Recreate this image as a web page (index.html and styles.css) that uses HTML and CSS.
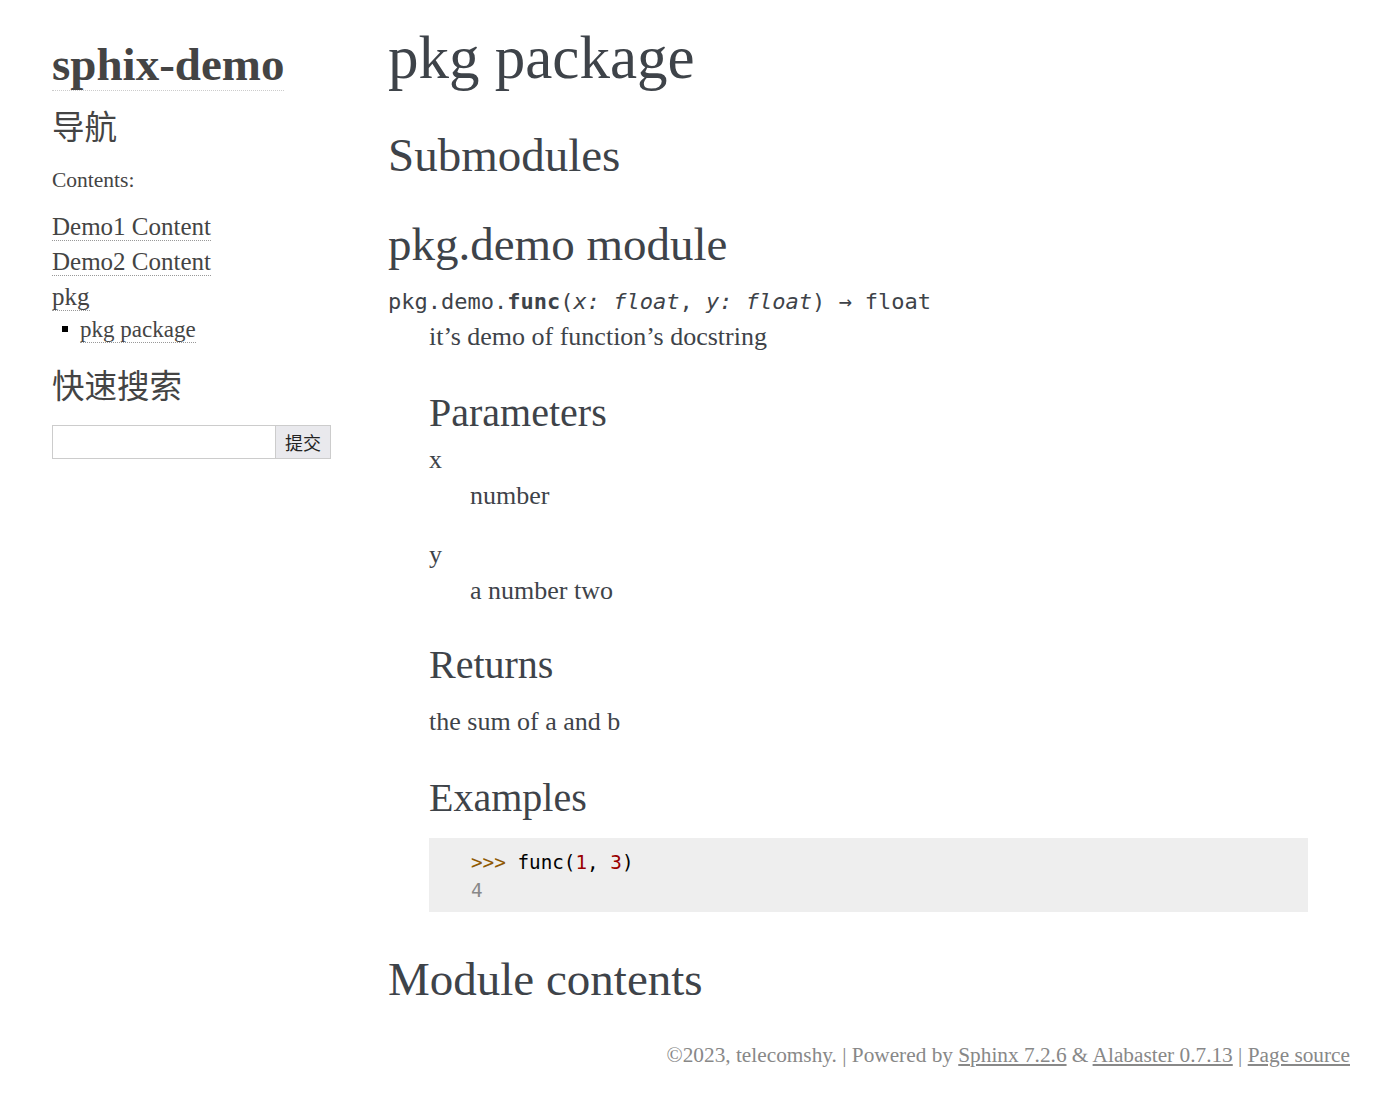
FILE: index.html
```html
<!DOCTYPE html>
<html lang="zh-CN">
<head>
    <meta charset="UTF-8">
    <meta name="viewport" content="width=device-width, initial-scale=1.0">
    <title>pkg package &#8212; sphix-demo</title>
    <link rel="stylesheet" href="styles.css">
</head>
<body>
    <div class="document">
        <div class="sphinxsidebar">
            <h1 class="logo"><a href="#">sphix-demo</a></h1>
            <h3 class="side-title">导航</h3>
            <p class="caption">Contents:</p>
            <ul class="toc">
                <li><a href="#">Demo1 Content</a></li>
                <li><a href="#">Demo2 Content</a></li>
                <li><a href="#">pkg</a>
                    <ul class="toc-sub">
                        <li><a href="#">pkg package</a></li>
                    </ul>
                </li>
            </ul>
            <h3 class="side-title search-title">快速搜索</h3>
            <form class="search">
                <input type="text" name="q" aria-label="search">
                <button type="submit">提交</button>
            </form>
        </div>

        <div class="body">
            <h1 class="page-title">pkg package</h1>
            <h2 class="section-title">Submodules</h2>
            <h2 class="section-title">pkg.demo module</h2>

            <dl class="function">
                <dt class="sig">
                    <span class="sig-prename">pkg.demo.</span><span class="sig-name">func</span>(<em>x: float</em>, <em>y: float</em>) → float
                </dt>
                <dd>
                    <p class="docstring">it’s demo of function’s docstring</p>

                    <p class="rubric rubric-first">Parameters</p>
                    <dl class="params">
                        <dt class="param-name">x</dt>
                        <dd class="param-desc">number</dd>
                        <dt class="param-name param-next">y</dt>
                        <dd class="param-desc">a number two</dd>
                    </dl>

                    <p class="rubric">Returns</p>
                    <p class="returns">the sum of a and b</p>

                    <p class="rubric rubric-examples">Examples</p>
                    <pre class="highlight"><span class="gp">&gt;&gt;&gt; </span>func(<span class="mi">1</span>, <span class="mi">3</span>)
<span class="go">4</span></pre>
                </dd>
            </dl>

            <h2 class="section-title module-contents">Module contents</h2>
        </div>
    </div>

    <div class="footer">
        &copy;2023, telecomshy.
        |
        Powered by <a href="#">Sphinx 7.2.6</a>
        &amp; <a href="#">Alabaster 0.7.13</a>
        |
        <a href="#">Page source</a>
    </div>
</body>
</html>
```

FILE: styles.css
```css
:root {
    --text-color: #3e4349;
    --sidebar-color: #444;
    --muted: #888;
    --code-bg: #eeeeee;
    --serif: 'Liberation Serif', 'Times New Roman', serif;
    --mono: 'DejaVu Sans Mono', 'Liberation Mono', monospace;
    --cjk: 'Noto Sans CJK SC', sans-serif;
}

* {
    margin: 0;
    padding: 0;
    box-sizing: border-box;
}

body {
    font-family: var(--serif);
    font-size: 26px;
    color: var(--text-color);
    background: #fff;
}

.document {
    display: flex;
    width: 1321px;
    margin: 0 auto;
}

/* sidebar */

.sphinxsidebar {
    width: 329px;
    flex-shrink: 0;
    padding-left: 23px;
    color: var(--sidebar-color);
}

.sphinxsidebar a {
    color: var(--sidebar-color);
    text-decoration: none;
    border-bottom: 1px dotted #999;
}

.logo {
    margin-top: 37px;
    font-size: 47px;
    line-height: 54px;
    font-weight: 700;
}

.logo a {
    border-bottom: 1px dotted #ccc;
}

.side-title {
    margin-top: 14px;
    font-family: var(--cjk);
    font-size: 32.5px;
    line-height: 40px;
    font-weight: 400;
}

.caption {
    margin-top: 20px;
    font-size: 21.5px;
    line-height: 30px;
}

.toc {
    list-style: none;
    margin-top: 14px;
    font-size: 25px;
    line-height: 35px;
}

.toc-sub {
    list-style: none;
    font-size: 23px;
    line-height: 32px;
}

.toc-sub li {
    padding-left: 10px;
}

.toc-sub li::before {
    content: "";
    display: inline-block;
    width: 6px;
    height: 6px;
    background: #000;
    margin-right: 12px;
    vertical-align: 5px;
}

.search-title {
    margin-top: 18px;
}

.search {
    display: flex;
    margin-top: 21px;
    width: 279px;
    height: 34px;
}

.search input {
    width: 223px;
    height: 34px;
    border: 1px solid #ccc;
    border-right: none;
    font-size: 18px;
    padding: 0 4px;
}

.search button {
    width: 56px;
    height: 34px;
    border: 1px solid #ccc;
    background: #e9e9ed;
    font-family: var(--cjk);
    font-size: 18px;
    color: #222;
}

/* body */

.body {
    flex: 1;
    padding: 0 42px 0 30px;
}

.page-title {
    margin-top: 22px;
    font-size: 61px;
    line-height: 72px;
    font-weight: 400;
}

.section-title {
    margin-top: 33px;
    font-size: 47px;
    line-height: 56px;
    font-weight: 400;
}

.sig {
    margin-top: 15px;
    font-family: var(--mono);
    font-size: 22px;
    line-height: 30px;
    white-space: nowrap;
}

.sig-name {
    font-weight: 700;
}

.sig em {
    font-style: italic;
}

.function > dd {
    margin-left: 41px;
}

.docstring {
    margin-top: 2px;
    line-height: 36px;
}

.rubric {
    margin-top: 32px;
    font-size: 40px;
    line-height: 48px;
}

.rubric-first {
    margin-top: 34px;
}

.params dt,
.params dd {
    line-height: 36px;
}

.param-name {
    margin-top: 5px;
}

.param-next {
    margin-top: 23px;
}

.param-desc {
    margin-top: 0;
    margin-left: 41px;
}

.returns {
    margin-top: 15px;
    line-height: 36px;
}

.rubric-examples {
    margin-top: 34px;
}

.highlight {
    margin-top: 16px;
    padding: 11px 42px 7px;
    background: var(--code-bg);
    font-family: var(--mono);
    font-size: 19.3px;
    line-height: 28px;
    color: #000;
}

.gp {
    color: #8f5902;
}

.mi {
    color: #990000;
}

.go {
    color: var(--muted);
}

.module-contents {
    margin-top: 39px;
}

/* footer */

.footer {
    width: 1321px;
    margin: 34px auto 30px;
    text-align: right;
    font-size: 21.3px;
    line-height: 28px;
    color: var(--muted);
}

.footer a {
    color: var(--muted);
}
```
